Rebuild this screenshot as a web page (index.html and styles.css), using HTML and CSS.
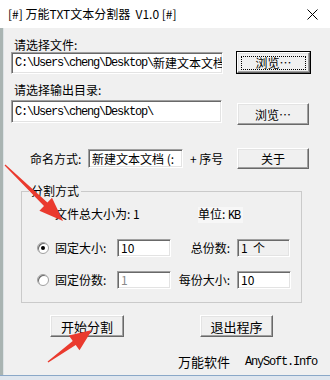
FILE: index.html
```html
<html>

<head>
	<title>万能TXT文本分割器</title>
	<link rel="stylesheet" href="styles.css">
</head>

<body>
	<div class="window">
		<div class="titlebar">
			<span>[#] 万能TXT文本分割器&nbsp;&nbsp;V1.0 [#]</span>
			<svg class="close" width="11" height="11" viewBox="0 0 11 11">
				<path d="M0.5 0.5 L10.5 10.5 M10.5 0.5 L0.5 10.5" stroke="#000" stroke-width="1" fill="none" />
			</svg>
		</div>

		<div class="content">
			<div class="label first">请选择文件:</div>
			<div class="path-row">
				<div class="field path-source"><span class="mono">C:\Users\cheng\Desktop\</span>新建文本文档.txt</div>
				<button class="btn browse default"><span class="focus">浏览…</span></button>
			</div>

			<div class="label second">请选择输出目录:</div>
			<div class="path-row">
				<div class="field path-output"><span class="mono">C:\Users\cheng\Desktop\</span></div>
				<button class="btn browse lower">浏览…</button>
			</div>

			<div class="naming-row">
				<span class="naming-label">命名方式:</span>
				<div class="field naming">新建文本文档 (:</div>
				<span class="suffix">+ 序号</span>
				<button class="btn about">关于</button>
			</div>

			<fieldset class="split-group">
				<legend>分割方式</legend>
				<div class="info-row">
					<span class="total">文件总大小为: 1</span>
					<span class="unit">单位: <span class="mono">KB</span></span>
				</div>
				<div class="option-row top">
					<span class="radio checked"></span>
					<span class="option-label">固定大小:</span>
					<div class="field small">10</div>
					<span class="count-label">总份数:</span>
					<div class="field small readonly">1&nbsp;&nbsp;个</div>
				</div>
				<div class="option-row">
					<span class="radio"></span>
					<span class="option-label">固定份数:</span>
					<div class="field small disabled">1</div>
					<span class="count-label">每份大小:</span>
					<div class="field small">10</div>
				</div>
			</fieldset>

			<div class="action-row">
				<button class="btn action start">开始分割</button>
				<button class="btn action quit">退出程序</button>
			</div>

			<div class="footer">
				<span class="brand">万能软件</span>
				<span class="mono site">AnySoft.Info</span>
			</div>
		</div>

		<svg class="arrows" width="330" height="380" viewBox="0 0 330 380">
			<polygon fill="#ea3a2e" points="4.6,165.5 44,206.1 39.4,210.8 63,221 52,197.8 47.4,202.5 5.4,164.5" />
			<polygon fill="#ea3a2e" points="48.3,362.5 75.7,344.9 79.5,350.2 92,330 68.9,335.6 72.7,340.9 47.6,361.5" />
		</svg>
	</div>
</body>

</html>
```

FILE: styles.css
```css
* {
	box-sizing: border-box;
	margin: 0;
	padding: 0;
}

body {
	background: #dfe6ee;
	font-family: "Noto Sans CJK SC", "Liberation Sans", sans-serif;
	font-size: 12px;
	color: #000;
}

.window {
	position: relative;
	width: 330px;
	height: 376px;
	background: #f0f0f0;
	border-bottom: 1px solid #8aa8c8;
	box-shadow: inset 3px 0 #a9b4b2, inset 4px 0 #dde3e6;
	overflow: hidden;
}

.titlebar {
	height: 28px;
	background: #fff;
	display: flex;
	align-items: center;
	justify-content: space-between;
	padding: 0 12px 0 8px;
	font-size: 12px;
	line-height: 14px;
}

.content {
	padding-left: 11px;
	line-height: 14px;
}

.mono {
	font-family: "Liberation Mono", monospace;
	letter-spacing: -1.2px;
}

.label.first {
	margin-top: 10px;
	padding-left: 3px;
}

.label.second {
	margin-top: 9px;
	padding-left: 3px;
}

.path-row {
	display: flex;
	align-items: flex-start;
}

.label.second + .path-row {
	margin-top: 3px;
}

/* sunken edit box */
.field {
	background: #fff;
	border: 1px solid;
	border-color: #a0a0a0 #fff #fff #a0a0a0;
	box-shadow: inset 1px 1px #696969, inset -1px -1px #e3e3e3;
	padding: 0 3px;
	white-space: nowrap;
	overflow: hidden;
	display: flex;
	align-items: center;
}

.path-source {
	width: 212px;
	height: 22px;
}

.path-output {
	width: 211px;
	height: 23px;
}

/* raised push button */
.btn {
	font-family: inherit;
	font-size: 12px;
	background: #f0f0f0;
	border: 1px solid;
	border-color: #fff #696969 #696969 #fff;
	box-shadow: inset -1px -1px #a0a0a0, inset 1px 1px #e3e3e3;
	display: flex;
	align-items: center;
	justify-content: center;
	color: #000;
	white-space: nowrap;
}

.btn.browse {
	width: 72px;
	height: 21px;
	margin-left: 14px;
}

.btn.default {
	width: 73px;
	outline: 1px solid #000;
	outline-offset: 0;
}

.btn .focus {
	border: 1px dotted #000;
	width: 65px;
	height: 14px;
	display: flex;
	align-items: center;
	justify-content: center;
}

.btn.lower {
	height: 22px;
	margin-top: 3px;
	margin-left: 15px;
}

.naming-row {
	display: flex;
	align-items: center;
	margin-top: 23px;
	white-space: nowrap;
}

.naming-label {
	margin-left: 19px;
	width: 58px;
}

.field.naming {
	width: 95px;
	height: 19px;
}

.suffix {
	margin-left: 7px;
	width: 41px;
}

.btn.about {
	width: 72px;
	height: 21px;
	margin-left: 6px;
}

.split-group {
	margin: 15px 0 0 10px;
	width: 281px;
	height: 119px;
	border: 1px solid #cacaca;
	padding: 0;
	min-width: 0;
}

.split-group legend {
	margin-left: 7px;
	padding: 0 2px;
	line-height: 14px;
}

.info-row {
	display: flex;
	margin-top: 9px;
}

.total {
	margin-left: 33px;
	width: 143px;
}

.unit {
	background: #f7f7f7;
	padding: 0 3px 0 0;
}

.option-row {
	display: flex;
	align-items: center;
	margin-top: 14px;
}

.option-row.top {
	margin-top: 16px;
}

.radio {
	width: 12px;
	height: 12px;
	border-radius: 50%;
	background: #fff;
	border: 1px solid #a0a0a0;
	box-shadow: inset 1px 1px #696969;
	margin-left: 15px;
	position: relative;
}

.radio.checked::after {
	content: "";
	position: absolute;
	left: 3px;
	top: 3px;
	width: 4px;
	height: 4px;
	border-radius: 50%;
	background: #000;
}

.option-label {
	margin-left: 6px;
	width: 62px;
}

.field.small {
	width: 54px;
	height: 18px;
}

.field.readonly {
	background: #f0f0f0;
	width: 53px;
}

.field.disabled {
	color: #8a8a8a;
}

.count-label {
	width: 66px;
	text-align: right;
	padding-right: 7px;
}

.action-row {
	display: flex;
	margin-top: 12px;
}

.btn.action {
	height: 22px;
	font-size: 13px;
}

.btn.start {
	width: 74px;
	margin-left: 39px;
}

.btn.quit {
	width: 73px;
	margin-left: 76px;
}

.footer {
	display: flex;
	margin-top: 18px;
	font-size: 13px;
}

.brand {
	margin-left: 167px;
	width: 67px;
}

.site {
	font-size: 12px;
}

.arrows {
	position: absolute;
	left: 0;
	top: 0;
	pointer-events: none;
}
```
